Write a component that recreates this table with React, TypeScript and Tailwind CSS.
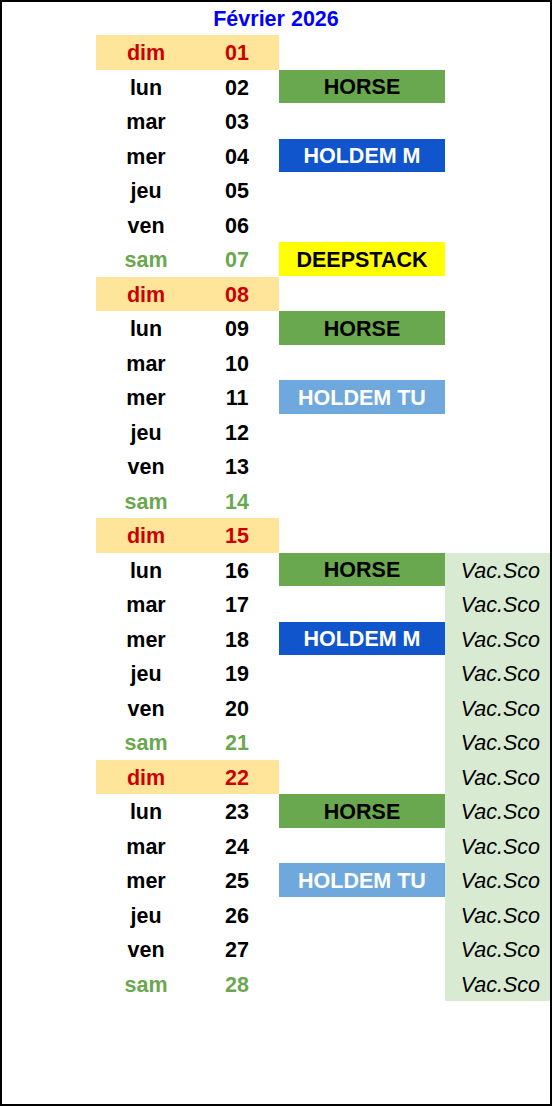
const days = ["dim", "lun", "mar", "mer", "jeu", "ven", "sam"]

type Event = { label: string; cls: string }

const horse: Event = { label: "HORSE", cls: "bg-[#6aa84f] text-black" }
const holdemM: Event = { label: "HOLDEM M", cls: "bg-[#1155cc] text-white" }
const holdemTu: Event = { label: "HOLDEM TU", cls: "bg-[#6fa8dc] text-white" }
const deepstack: Event = { label: "DEEPSTACK", cls: "bg-[#ffff00] text-black" }

const events: Record<number, Event> = {
  2: horse,
  4: holdemM,
  7: deepstack,
  9: horse,
  11: holdemTu,
  16: horse,
  18: holdemM,
  23: horse,
  25: holdemTu,
}

export default function App() {
  const rows = Array.from({ length: 28 }, (_, i) => i + 1)

  return (
    <div
      className="w-[552px] h-[1106px] border-2 border-black bg-white font-bold text-[21.5px] leading-none"
      style={{ fontFamily: '"Liberation Sans", Arial, sans-serif' }}
    >
      <div className="h-[33px] pt-[2px] flex items-center justify-center text-[21.5px] text-[#0000ff]">
        Février 2026
      </div>

      <div className="grid grid-cols-[94px_97px_86px_166px_105px]">
        {rows.map((d) => {
          const name = days[(d - 1) % 7]
          const isSun = name === "dim"
          const isSat = name === "sam"
          const color = isSun ? "text-[#cc0000]" : isSat ? "text-[#6aa84f]" : "text-black"
          const bg = isSun ? "bg-[#ffe599]" : ""
          const ev = events[d]
          const vac = d >= 16

          return (
            <div key={d} className="contents">
              <div className="h-[34.5px]" />
              <div className={`h-[34.5px] pt-[3px] pl-[3px] flex items-center justify-center ${color} ${bg}`}>
                {name}
              </div>
              <div className={`h-[34.5px] pt-[3px] pl-[2px] flex items-center justify-center ${color} ${bg}`}>
                {String(d).padStart(2, "0")}
              </div>
              <div className="h-[34.5px] flex">
                {ev && (
                  <div className={`flex-1 pt-[3px] flex items-center justify-center border-b border-white ${ev.cls}`}>
                    {ev.label}
                  </div>
                )}
              </div>
              <div
                className={`h-[34.5px] pt-[3px] flex items-center justify-end pr-[10px] italic font-normal text-black ${
                  vac ? "bg-[#d9ead3]" : ""
                }`}
              >
                {vac ? "Vac.Sco" : ""}
              </div>
            </div>
          )
        })}
      </div>
    </div>
  )
}
